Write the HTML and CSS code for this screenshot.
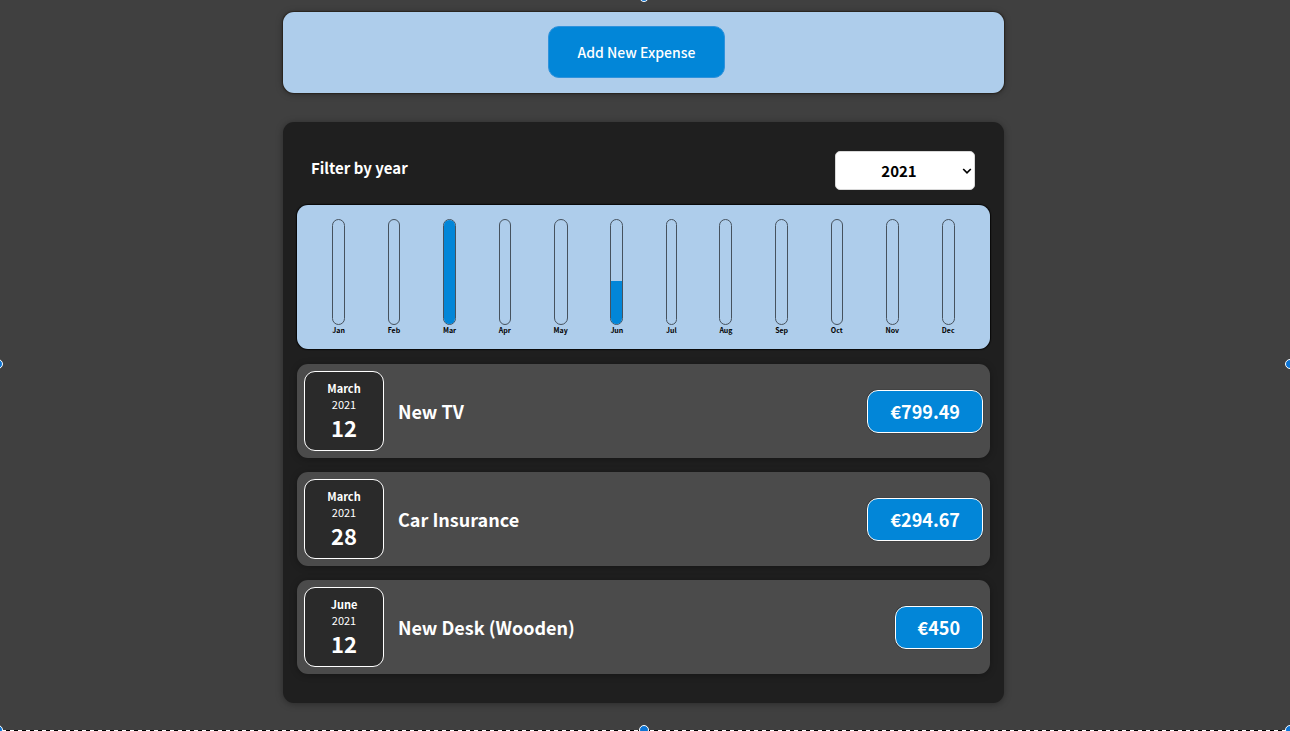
FILE: index.html
```html
<!DOCTYPE html>
<html lang="en">
<head>
<meta charset="utf-8">
<meta name="viewport" content="width=device-width, initial-scale=1">
<title>Expenses</title>
<link rel="stylesheet" href="styles.css">
</head>
<body>
<main class="page">
  <section class="new-expense">
    <button class="add-button" type="button">Add New Expense</button>
  </section>

  <section class="expenses">
    <div class="filter">
      <label class="filter-label" for="year">Filter by year</label>
      <div class="select-wrap">
        <select class="filter-select" id="year">
          <option>2022</option>
          <option selected>2021</option>
          <option>2020</option>
          <option>2019</option>
        </select>
        <svg class="chevron" viewBox="0 0 10 6" aria-hidden="true"><path d="M1.2 1 5 4.8 8.8 1"/></svg>
      </div>
    </div>

    <div class="chart">
      <div class="chart-bar"><div class="track"></div><div class="month">Jan</div></div>
      <div class="chart-bar"><div class="track"></div><div class="month">Feb</div></div>
      <div class="chart-bar"><div class="track"><div class="fill" style="height: 100%"></div></div><div class="month">Mar</div></div>
      <div class="chart-bar"><div class="track"></div><div class="month">Apr</div></div>
      <div class="chart-bar"><div class="track"></div><div class="month">May</div></div>
      <div class="chart-bar"><div class="track"><div class="fill" style="height: 41%"></div></div><div class="month">Jun</div></div>
      <div class="chart-bar"><div class="track"></div><div class="month">Jul</div></div>
      <div class="chart-bar"><div class="track"></div><div class="month">Aug</div></div>
      <div class="chart-bar"><div class="track"></div><div class="month">Sep</div></div>
      <div class="chart-bar"><div class="track"></div><div class="month">Oct</div></div>
      <div class="chart-bar"><div class="track"></div><div class="month">Nov</div></div>
      <div class="chart-bar"><div class="track"></div><div class="month">Dec</div></div>
    </div>

    <ul class="list">
      <li class="item">
        <div class="date"><div class="date-month">March</div><div class="date-year">2021</div><div class="date-day">12</div></div>
        <h2 class="title">New TV</h2>
        <div class="price">€799.49</div>
      </li>
      <li class="item">
        <div class="date"><div class="date-month">March</div><div class="date-year">2021</div><div class="date-day">28</div></div>
        <h2 class="title">Car Insurance</h2>
        <div class="price">€294.67</div>
      </li>
      <li class="item">
        <div class="date"><div class="date-month">June</div><div class="date-year">2021</div><div class="date-day">12</div></div>
        <h2 class="title">New Desk (Wooden)</h2>
        <div class="price">€450</div>
      </li>
    </ul>
  </section>

  <div class="selection" aria-hidden="true">
    <span class="handle top"></span>
    <span class="handle left"></span>
    <span class="handle right"></span>
    <span class="handle bottom"></span>
    <span class="handle bottom-left"></span>
    <span class="handle bottom-right"></span>
  </div>
</main>
</body>
</html>
```

FILE: styles.css
```css
* {
  box-sizing: border-box;
}

body {
  margin: 0;
  background: #404040;
  color: #fff;
  font-family: "Noto Sans CJK JP", "Noto Sans", sans-serif;
}

.page {
  position: relative;
  min-height: 100vh;
  padding: 12px 19px 28px 16px;
  overflow: hidden;
}

.new-expense,
.expenses {
  max-width: 721px;
  margin: 0 auto;
  border-radius: 11px;
  box-shadow: 0 1px 7px rgba(0, 0, 0, 0.35);
}

.new-expense {
  display: flex;
  justify-content: center;
  padding: 14px 28px 15px 14px;
  background: #aecdeb;
  box-shadow: 0 0 1px 1px #29241f, 0 1px 7px rgba(0, 0, 0, 0.35);
}

.add-button {
  padding: 14px 29px;
  border: 1px solid #2f92dc;
  border-radius: 11px;
  background: #0286d8;
  color: #fff;
  font: 500 14px/22px "Noto Sans CJK JP", "Noto Sans", sans-serif;
}

.expenses {
  margin-top: 29px;
  padding: 14px 14px 29px;
  background: #1f1f1f;
}

.filter {
  display: flex;
  align-items: center;
  justify-content: space-between;
  padding: 15px 15px 15px 14px;
}

.filter-label {
  padding-bottom: 6px;
  font-size: 15px;
  font-weight: 700;
  line-height: 24px;
}

.select-wrap {
  position: relative;
}

.filter-select {
  display: block;
  width: 140px;
  height: 39px;
  padding: 0 12px 0 0;
  border: 1px solid #d8d8d8;
  border-radius: 5px;
  appearance: none;
  background: #fff;
  color: #000;
  font: 700 15px/24px "Noto Sans CJK JP", "Noto Sans", sans-serif;
  text-align: center;
  text-align-last: center;
}

.chevron {
  position: absolute;
  top: 17px;
  right: 3px;
  width: 10px;
  height: 6px;
  fill: none;
  stroke: #000;
  stroke-width: 1.7;
  pointer-events: none;
}

.chart {
  display: flex;
  justify-content: space-around;
  height: 144px;
  padding: 14px;
  border-radius: 11px;
  background: #aecdeb;
  box-shadow: 0 0 1px 1px #080808;
}

.chart-bar {
  display: flex;
  flex-direction: column;
  align-items: center;
}

.track {
  display: flex;
  flex-direction: column;
  justify-content: flex-end;
  width: 100%;
  height: 106px;
  overflow: hidden;
  border: 1px solid #46525e;
  border-radius: 11px;
}

.fill {
  background: #0286d8;
}

.month {
  color: #000;
  font-size: 7px;
  font-weight: 700;
  line-height: 10px;
}

.list {
  display: grid;
  gap: 14px;
  margin: 0;
  padding: 15px 0 0;
  list-style: none;
}

.item {
  display: flex;
  align-items: center;
  padding: 7px;
  border-radius: 11px;
  background: #4b4b4b;
  box-shadow: 0 1px 7px rgba(0, 0, 0, 0.3);
}

.date {
  display: flex;
  flex-direction: column;
  align-items: center;
  justify-content: center;
  width: 80px;
  height: 80px;
  border: 1px solid #fff;
  border-radius: 11px;
  background: #2a2a2a;
}

.date-month,
.date-year {
  font-size: 11px;
  line-height: 16px;
}

.date-month {
  font-weight: 700;
}

.date-day {
  font-size: 22px;
  font-weight: 700;
  line-height: 30px;
}

.title {
  flex: 1;
  margin: 0 14px;
  font-size: 18px;
  font-weight: 700;
  line-height: 27px;
}

.price {
  padding: 7px 22px;
  border: 1px solid #fff;
  border-radius: 11px;
  background: #0286d8;
  box-shadow: 0 0 1px #000;
  font-size: 18px;
  font-weight: 700;
  line-height: 27px;
}

.selection {
  position: absolute;
  inset: 0;
  pointer-events: none;
  background: repeating-linear-gradient(90deg, #000 0 2px, #fff 2px 6px, #000 6px 8px) bottom / 100% 1px no-repeat;
}

.handle {
  position: absolute;
  width: 10px;
  height: 10px;
  border: 1px solid #fff;
  border-radius: 50%;
  background: #0c74d4;
}

.top {
  top: -8px;
  left: calc(50% - 6px);
}

.left {
  top: calc(50% - 7px);
  left: -7px;
}

.right {
  top: calc(50% - 7px);
  right: -5px;
}

.bottom {
  bottom: -4px;
  left: calc(50% - 6px);
}

.bottom-left {
  bottom: -4px;
  left: -7px;
}

.bottom-right {
  right: -5px;
  bottom: -4px;
}
```
